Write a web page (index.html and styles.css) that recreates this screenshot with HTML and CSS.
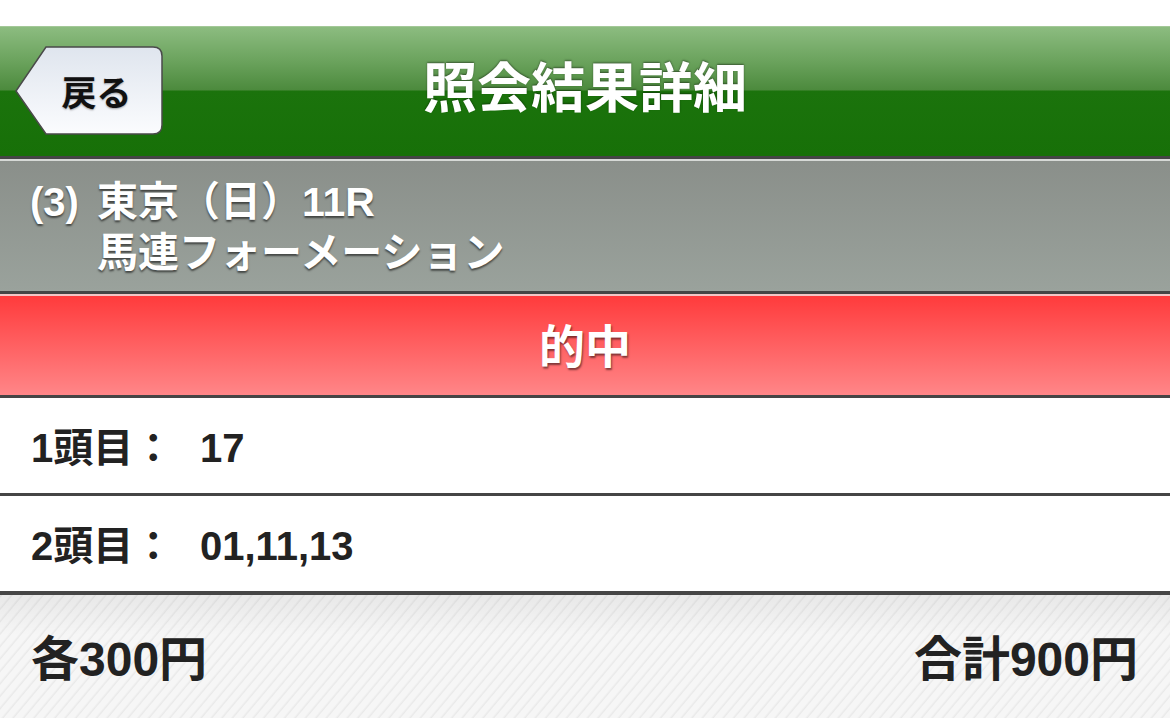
FILE: index.html
```html
<!DOCTYPE html>
<html lang="ja">
<head>
<meta charset="utf-8">
<title>照会結果詳細</title>
<link rel="stylesheet" href="styles.css">
</head>
<body>
<div class="page">
  <div class="topgap"></div>
  <header class="navbar">
    <div class="nav-left">
      <a class="back-btn" href="#">
        <svg class="back-shape" width="149" height="90" viewBox="0 0 149 90">
          <defs>
            <linearGradient id="bg" x1="0" y1="0" x2="0" y2="1">
              <stop offset="0" stop-color="#dfe5ee"/>
              <stop offset="1" stop-color="#fbfcfe"/>
            </linearGradient>
          </defs>
          <path d="M31 1 H138 Q147 1 147 10 V79 Q147 88 138 88 H31 L1 45 Z" fill="url(#bg)" stroke="#4a4a4a" stroke-width="1.5"/>
        </svg>
        <span class="back-label">戻る</span>
      </a>
    </div>
    <h1 class="nav-title">照会結果詳細</h1>
    <div class="nav-right"></div>
  </header>
  <section class="race">
    <span class="race-no">(3)</span>
    <div class="race-lines">
      <div>東京（日）11R</div>
      <div>馬連フォーメーション</div>
    </div>
  </section>
  <section class="result">的中</section>
  <div class="row"><div class="row-line"><span class="row-label">1頭目：</span><span class="row-value">17</span></div></div>
  <div class="row"><div class="row-line"><span class="row-label">2頭目：</span><span class="row-value">01,11,13</span></div></div>
  <footer class="summary">
    <div class="sum-line"><span>各300円</span><span>合計900円</span></div>
  </footer>
</div>
</body>
</html>
```
FILE: styles.css
```css
* { box-sizing: border-box; }
html, body { margin: 0; padding: 0; }
body {
  width: 1170px;
  height: 718px;
  overflow: hidden;
  background: #ffffff;
  font-family: "Liberation Sans", "Noto Sans CJK JP", sans-serif;
  font-weight: bold;
}
.page { display: flex; flex-direction: column; height: 718px; }
.topgap { height: 26px; background: #fff; flex: none; }

.navbar {
  flex: none;
  height: 133px;
  display: grid;
  grid-template-columns: 1fr auto 1fr;
  align-items: center;
  border-top: 1px solid #a3c898;
  border-bottom: 3px solid #454545;
  box-shadow: 0 2px 0 #d6d9d6;
  margin-bottom: 2px;
  background: linear-gradient(to bottom, #8cbc80 0px, #6aa25c 35px, #4c8a3d 63px, #1b730c 64px, #177008 100%);
}
.nav-left { padding-left: 15px; display: flex; align-items: center; }
.back-btn {
  position: relative;
  width: 149px;
  height: 90px;
  display: flex;
  align-items: center;
  justify-content: center;
  text-decoration: none;
  padding-left: 14px;
  margin-top: -2px;
}
.back-shape { position: absolute; left: 0; top: 0; }
.back-label {
  position: relative;
  color: #111;
  font-size: 35px;
  text-shadow: 0 1px 2px rgba(0,0,0,0.35);
  font-family: "Noto Sans CJK JP", sans-serif;
}
.nav-title {
  margin: 0;
  color: #fff;
  font-family: "Noto Sans CJK JP", sans-serif;
  font-size: 54px;
  font-weight: bold;
  letter-spacing: 0;
  text-shadow: 0 -1px 2px rgba(0,0,0,0.45);
  margin-top: -14px;
}

.race {
  flex: none;
  height: 133px;
  display: flex;
  align-items: flex-start;
  padding: 16px 0 0 30px;
  border-bottom: 3px solid #454545;
  box-shadow: 0 2px 0 #f3c6c6;
  margin-bottom: 2px;
  background: linear-gradient(to bottom, #8a8f8a, #9aa29c);
  color: #fff;
  font-size: 41px;
  line-height: 51px;
  text-shadow: 0 2px 2px rgba(0,0,0,0.55);
}
.race-no { width: 67px; flex: none; font-size: 40px; }
.race-lines div { white-space: nowrap; }

.result {
  flex: none;
  height: 102px;
  display: flex;
  align-items: center;
  justify-content: center;
  border-bottom: 3px solid #454545;
  background: linear-gradient(to bottom, #ff3b3c, #ff8688);
  color: #fff;
  font-family: "Noto Sans CJK JP", sans-serif;
  font-size: 46px;
  text-shadow: 1px 2px 2px rgba(0,0,0,0.5);
  padding-bottom: 6px;
}

.row {
  flex: none;
  height: 98px;
  display: flex;
  align-items: center;
  padding: 0 0 2px 31px;
  border-bottom: 3px solid #454545;
  background: #fff;
  color: #222;
  font-size: 40px;
}
.row-line { display: flex; align-items: baseline; }
.row-label { width: 169px; flex: none; }

.summary {
  flex: 1;
  display: flex;
  align-items: center;
  padding: 0 32px 4px 31px;
  border-top: 1px solid #454545;
  color: #222;
  font-size: 48px;
  background:
    linear-gradient(to bottom, rgba(0,0,0,0.06), rgba(0,0,0,0) 40px),
    repeating-linear-gradient(-50deg, #f6f6f6 0px, #f6f6f6 5px, #e9e9e9 6px, #f6f6f6 8px);
}
.sum-line { flex: 1; display: flex; align-items: baseline; justify-content: space-between; }
```
